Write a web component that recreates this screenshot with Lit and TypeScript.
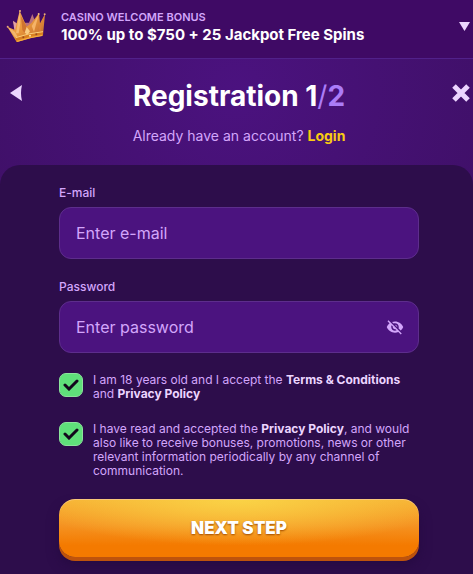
import { LitElement, html, css, svg } from "lit";
import { customElement, state } from "lit/decorators.js";

const crown = svg`
  <svg class="crown" viewBox="15 25 126 105" aria-hidden="true">
    <defs>
      <linearGradient id="gold" x1="0" y1="0" x2="1" y2="1">
        <stop offset="0" stop-color="#e89a68" />
        <stop offset="0.45" stop-color="#ec9a3c" />
        <stop offset="1" stop-color="#b8622c" />
      </linearGradient>
    </defs>
    <path d="M36 62 L50 72 L62 66 L84 66 L94 40 L102 62 L112 66 L106 100 L48 100Z" fill="#b9707c" />
    <path d="M36 60 L50 70 L48 90 L40 88Z" fill="#e2a0a0" />
    <path d="M19 78 L42 88 L56 30 L77 78 L92 66 L114 38 L117 68 L132 40 L126 104 Q88 110 47 124 Z" fill="url(#gold)" />
    <path d="M56 32 L58 66 L53 98 L45 98Z" fill="#f6b970" />
    <path d="M60 46 L77 78 L72 98 L64 88Z" fill="#cf7430" />
    <path d="M114 40 L106 68 L99 94 L92 76Z" fill="#f5b368" />
    <path d="M131 44 L122 72 L118 94 L113 82Z" fill="#dc8238" />
    <path d="M21 80 L42 94 L50 108 L42 110Z" fill="#f3b66c" />
    <path d="M77 79 L87 92 L80 102 L71 96Z" fill="#f9cb80" />
    <path d="M43 110 Q84 96 126 92 L125 105 Q86 110 47 124Z" fill="#d97f22" />
    <path d="M44 111 Q84 97 126 93" fill="none" stroke="#fbcf7c" stroke-width="3" />
    <path d="M48 122 Q86 109 124 104" fill="none" stroke="#f5ac3e" stroke-width="4" />
    <circle cx="67" cy="110" r="3" fill="#9c4d1e" />
    <circle cx="87" cy="105" r="3" fill="#ffe3a0" />
    <circle cx="106" cy="101" r="3" fill="#9c4d1e" />
    <circle cx="57" cy="31" r="3" fill="#f0b27c" />
    <circle cx="113" cy="40" r="3" fill="#f4bb84" />
    <circle cx="131" cy="41" r="3" fill="#eeae78" />
    <circle cx="20" cy="78" r="3" fill="#e8a678" />
  </svg>`;

@customElement("app-root")
export class AppRoot extends LitElement {
  @state() private showPassword = false;

  static styles = css`
    :host {
      display: flex;
      flex-direction: column;
      min-height: 100vh;
      box-sizing: border-box;
      background: radial-gradient(circle at 50% 90px, #4b127f 0, #401069 260px);
      color: #d3a6fb;
      font-family: Inter, "Noto Sans", sans-serif;
      font-size: 12px;
    }
    * {
      box-sizing: border-box;
    }
    button {
      border: 0;
      padding: 0;
      background: none;
      color: inherit;
      font: inherit;
      cursor: pointer;
    }
    svg {
      display: block;
    }
    .banner {
      display: flex;
      align-items: center;
      gap: 13px;
      width: 100%;
      height: 58px;
      padding: 0 3px 5px 6px;
      background: #3f0a65;
      text-align: left;
    }
    .crown {
      width: 42px;
      height: 35px;
    }
    .offer {
      flex: 1;
    }
    .kicker,
    .deal {
      display: block;
    }
    .kicker {
      font-size: 11px;
      font-weight: 600;
      line-height: 16px;
    }
    .deal {
      color: #fff;
      font-size: 15px;
      font-weight: 700;
      line-height: 20px;
    }
    .caret {
      width: 11px;
      height: 9px;
      fill: #ecd5ff;
    }
    header {
      display: grid;
      grid-template-columns: 59px 1fr 54px;
      align-items: start;
      padding: 17px 0 18px;
      border-top: 1px solid #51218a;
    }
    h1 {
      margin: 0;
      color: #fff;
      font-size: 28px;
      font-weight: 700;
      line-height: 40px;
      text-align: center;
    }
    .of {
      color: #ab7cf7;
    }
    .slash {
      font-weight: 400;
    }
    .nav {
      display: flex;
      align-items: center;
      height: 34px;
    }
    .back {
      justify-self: start;
      margin-left: 9px;
      fill: #ecd5ff;
    }
    .close {
      justify-self: end;
      margin-right: 3px;
    }
    .have {
      grid-column: 2;
      margin: 8px 0 0;
      font-size: 14px;
      line-height: 23px;
      text-align: center;
    }
    .login {
      color: #f8cb12;
      font-weight: 700;
      text-decoration: none;
    }
    form {
      flex: 1;
      padding: 20px 54px 13px 59px;
      border-radius: 20px 20px 0 0;
      background: #2d0d4b;
    }
    .field {
      margin-bottom: 20px;
    }
    .label {
      display: block;
      margin-bottom: 6px;
      font-weight: 500;
      line-height: 16px;
    }
    .box {
      display: flex;
      align-items: center;
      height: 52px;
      padding: 0 14px 0 16px;
      border: 1px solid #5d2d8c;
      border-radius: 12px;
      background: #4b137f;
    }
    .text {
      flex: 1;
      min-width: 0;
      padding: 0;
      border: 0;
      outline: 0;
      background: none;
      color: #fff;
      font: 400 16px/24px Inter, "Noto Sans", sans-serif;
    }
    .text::placeholder {
      color: #d3a6fb;
      opacity: 1;
    }
    .eye {
      fill: #d3a6fb;
    }
    .agree {
      display: flex;
      gap: 10px;
      margin-bottom: 21px;
      line-height: 14px;
    }
    .tick {
      display: grid;
      flex: none;
      width: 24px;
      height: 24px;
    }
    .tick > * {
      grid-area: 1 / 1;
    }
    .tick input {
      appearance: none;
      width: 24px;
      height: 24px;
      margin: 0;
      border: 1px solid #8de39d;
      border-radius: 7px;
      background: #4b137f;
    }
    .tick input:checked {
      background: #5fe07a;
    }
    .tick svg {
      place-self: center;
      pointer-events: none;
      visibility: hidden;
    }
    .tick input:checked + svg {
      visibility: visible;
    }
    .agree a {
      color: #ecd5ff;
      font-weight: 700;
      text-decoration: none;
    }
    .next {
      display: block;
      width: 100%;
      height: 58px;
      border-radius: 16px;
      background: radial-gradient(ellipse 60% 80% at 50% 0, #fad346 0, #f8b83300 100%),
        linear-gradient(#f6b034 0, #f59322 45%, #f47a00 80%, #f47a00 100%);
      box-shadow: inset 0 1px 0 #f9c77a, 0 4px 0 #be530c, 0 8px 12px #260a42;
      color: #fff;
      font-size: 17px;
      font-weight: 900;
      text-shadow: 0 1px 2px #a04a00;
    }
  `;

  render() {
    return html`
      <button class="banner" type="button">
        ${crown}
        <span class="offer">
          <span class="kicker">CASINO WELCOME BONUS</span>
          <span class="deal">100% up to $750 + 25 Jackpot Free Spins</span>
        </span>
        <svg class="caret" viewBox="0 0 11 9"><path d="M0 0h11L5.500 9z" /></svg>
      </button>
      <header>
        <button class="nav back" type="button" aria-label="Back">
          <svg width="13" height="18" viewBox="0 0 13 18"><path d="M13 1Q11 9 13 17L1 9z" /></svg>
        </button>
        <h1>Registration 1<span class="of"><span class="slash">/</span>2</span></h1>
        <button class="nav close" type="button" aria-label="Close">
          <svg width="18" height="18" viewBox="0 0 18 18">
            <path d="M2 2L16 16M16 2L2 16" stroke="#ecd5ff" stroke-width="5" />
          </svg>
        </button>
        <p class="have">Already have an account? <a class="login" href="#login">Login</a></p>
      </header>
      <form @submit=${(e: Event) => e.preventDefault()}>
        <div class="field">
          <label class="label" for="email">E-mail</label>
          <div class="box">
            <input class="text" id="email" type="email" placeholder="Enter e-mail" />
          </div>
        </div>
        <div class="field">
          <label class="label" for="password">Password</label>
          <div class="box">
            <input
              class="text"
              id="password"
              type=${this.showPassword ? "text" : "password"}
              placeholder="Enter password"
            />
            <button
              class="eye"
              type="button"
              aria-label="Show password"
              @click=${() => (this.showPassword = !this.showPassword)}
            >
              <svg width="18" height="18" viewBox="0 0 24 24">
                <path
                  d="M12 7c2.760 0 5 2.240 5 5 0 .65-.13 1.260-.36 1.830l2.920 2.920c1.510-1.260 2.700-2.890 3.430-4.750-1.730-4.390-6-7.500-11-7.500-1.400 0-2.740.25-3.980.7l2.160 2.160C10.740 7.130 11.350 7 12 7zM2 4.270l2.280 2.280.46.46C3.080 8.300 1.780 10.020 1 12c1.730 4.390 6 7.500 11 7.500 1.550 0 3.030-.3 4.380-.84l.42.42L19.730 22 21 20.730 3.270 3 2 4.270zM7.530 9.800l1.550 1.550c-.05.21-.08.43-.08.65 0 1.660 1.340 3 3 3 .22 0 .44-.03.65-.08l1.550 1.550c-.67.33-1.410.53-2.200.53-2.760 0-5-2.240-5-5 0-.79.2-1.530.53-2.200zm4.310-.78l3.150 3.150.02-.16c0-1.660-1.340-3-3-3l-.17.01z"
                />
              </svg>
            </button>
          </div>
        </div>
        <div class="agree">
          <span class="tick">${this.tick("age")}</span>
          <label for="age">
            I am 18 years old and I accept the <a href="#terms">Terms &amp; Conditions</a> and
            <a href="#privacy">Privacy Policy</a>
          </label>
        </div>
        <div class="agree">
          <span class="tick">${this.tick("news")}</span>
          <label for="news">
            I have read and accepted the <a href="#privacy">Privacy Policy</a>, and would also like
            to receive bonuses, promotions, news or other relevant information periodically by any
            channel of communication.
          </label>
        </div>
        <button class="next" type="submit">NEXT STEP</button>
      </form>
    `;
  }

  private tick(id: string) {
    return html`
      <input id=${id} type="checkbox" checked />
      <svg width="16" height="12" viewBox="0 0 16 12">
        <path d="M2 6L6 10L14 2" fill="none" stroke="#12081c" stroke-width="3" stroke-linecap="round" />
      </svg>
    `;
  }
}
